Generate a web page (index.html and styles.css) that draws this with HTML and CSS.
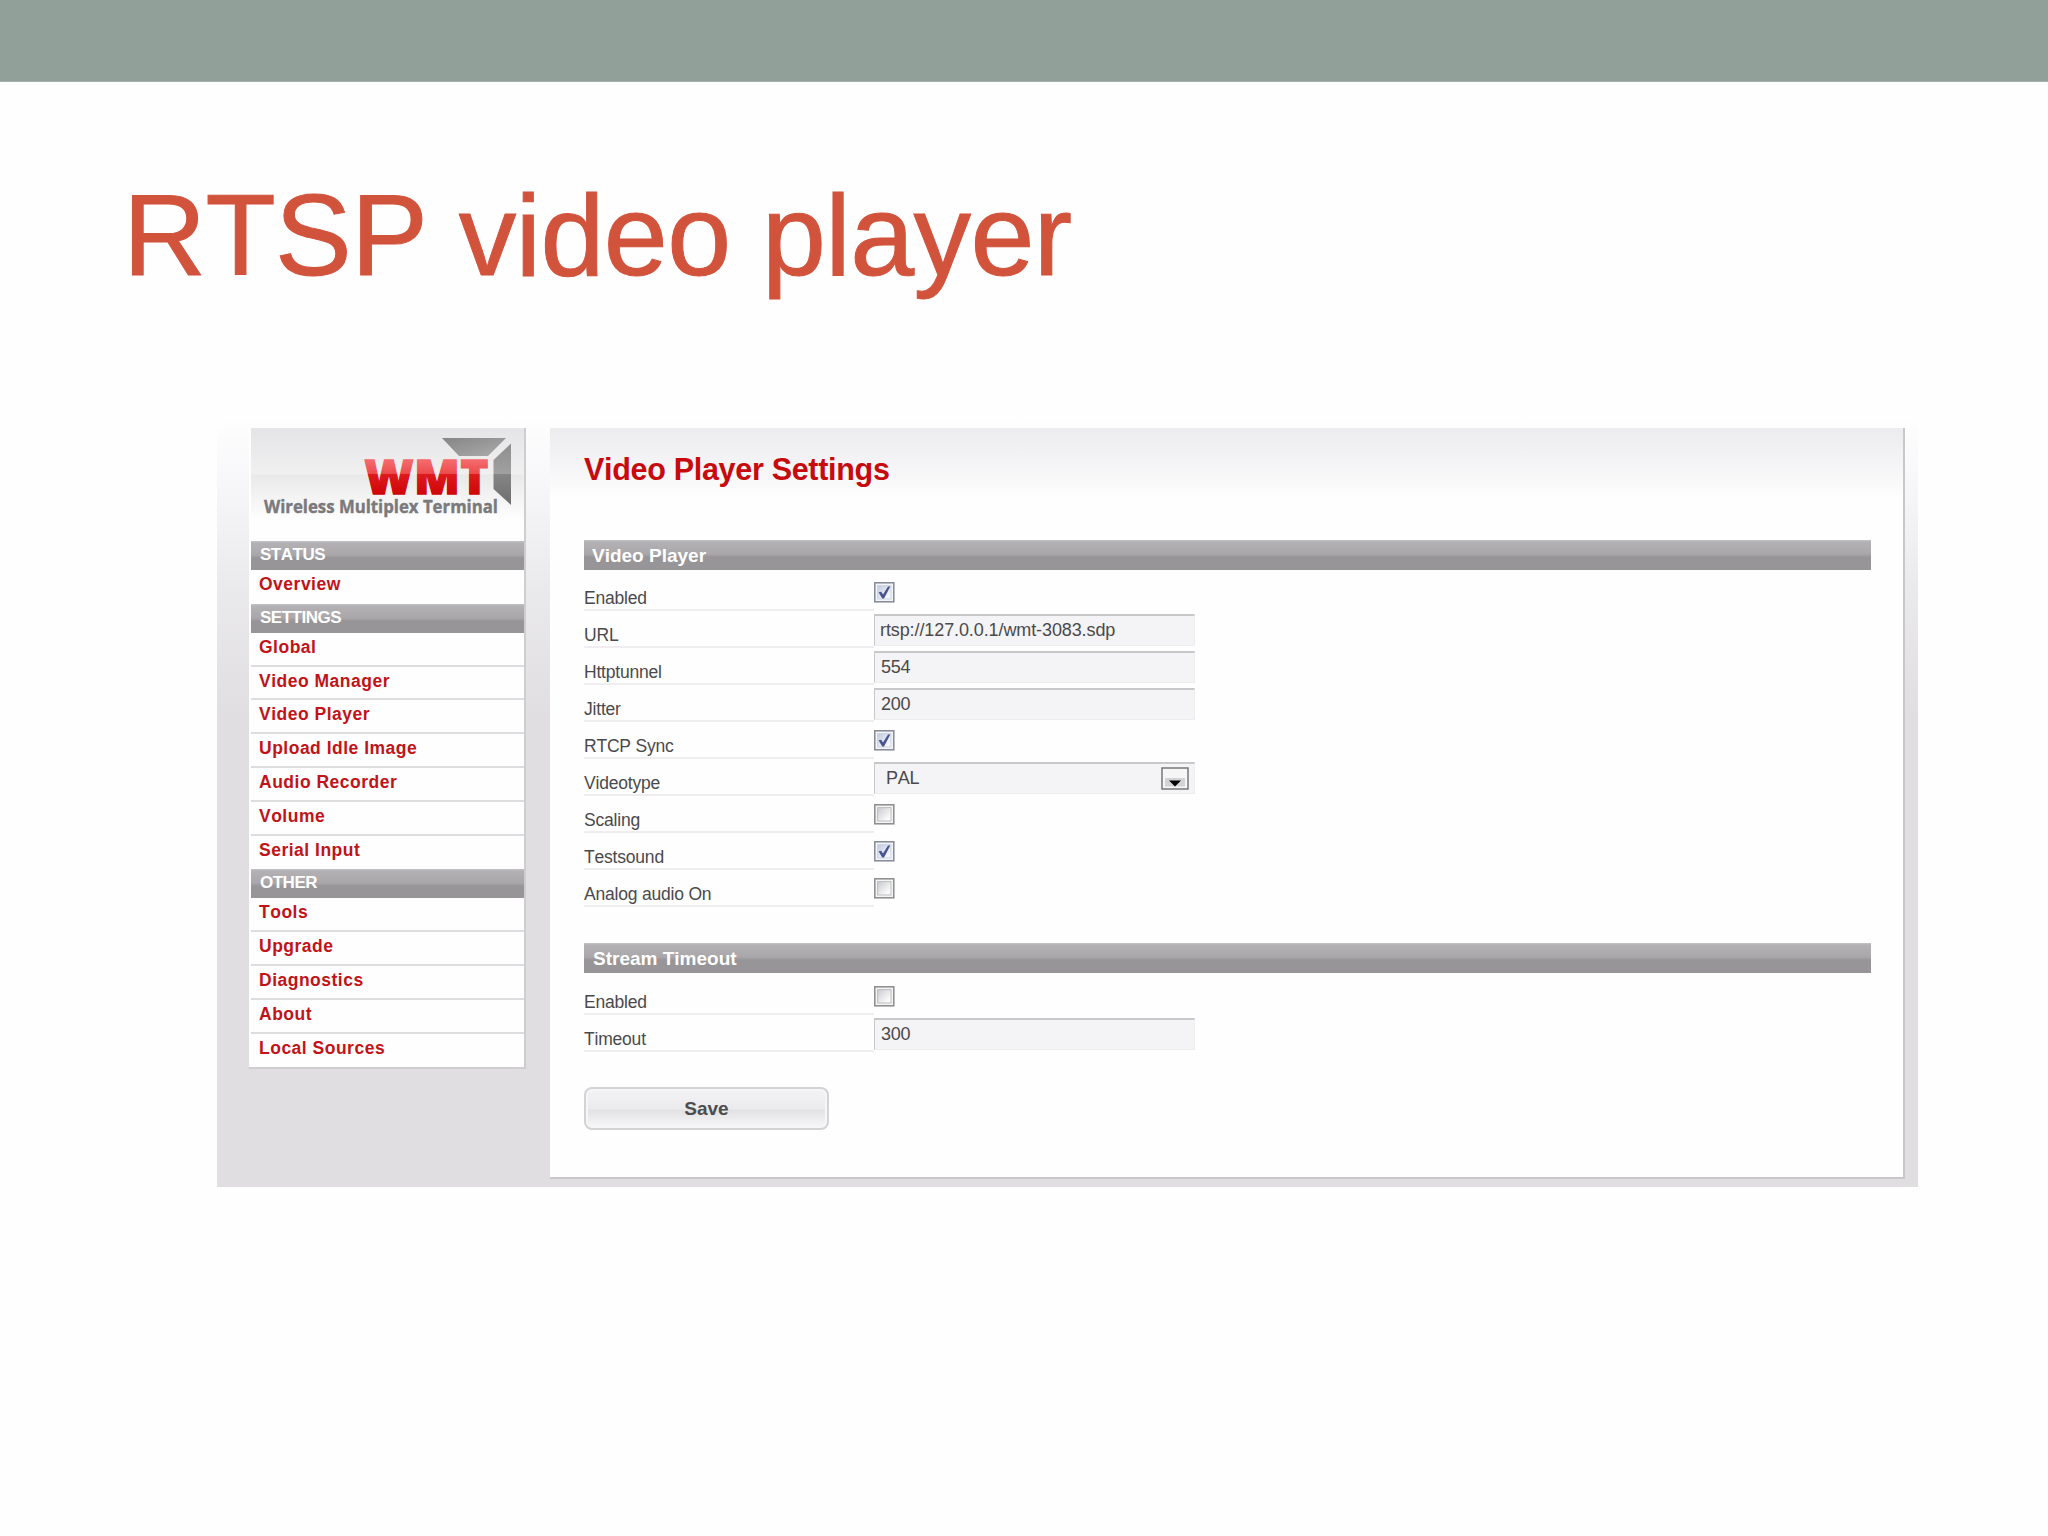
FILE: index.html
```html
<!DOCTYPE html>
<html lang="en">
    <head>
        <meta charset="UTF-8">
        <meta name="viewport" content="width=device-width, initial-scale=1.0">
        <title>RTSP video player</title>
        <link rel="stylesheet" href="styles.css">
    </head>
    <body>
        <div class="top-bar"></div>
        <h1 class="slide-title">RTSP video player</h1>

        <svg class="defs" width="0" height="0">
            <defs>
                <linearGradient id="boxOff" x1="0" y1="0" x2="1" y2="1">
                    <stop offset="0" stop-color="#c9cacf"/>
                    <stop offset="0.8" stop-color="#fbfbfb"/>
                </linearGradient>
                <linearGradient id="boxOn" x1="0" y1="0" x2="1" y2="1">
                    <stop offset="0" stop-color="#c0c9df"/>
                    <stop offset="0.8" stop-color="#f5f8fc"/>
                </linearGradient>
            </defs>
            <symbol id="box-off" viewBox="0 0 21 21">
                <rect x="0.800" y="0.800" width="19" height="19" fill="#f4f4f4" stroke="#8a8b8d" stroke-width="1.5"/>
                <rect x="3.600" y="3.600" width="13.400" height="13.400" fill="url(#boxOff)" stroke="#bcbdc1" stroke-width="1"/>
            </symbol>
            <symbol id="box-on" viewBox="0 0 21 21">
                <rect x="0.800" y="0.800" width="19" height="19" fill="#f3f5f9" stroke="#838994" stroke-width="1.5"/>
                <rect x="3.600" y="3.600" width="13.400" height="13.400" fill="url(#boxOn)" stroke="#ccd3e2" stroke-width="1"/>
                <path d="M4.600 10.200 L7.200 9.800 L9 12.600 L14 4.400 L16.300 4.400 L10 16.600 L8.200 16.600 Z" fill="#48558f"/>
            </symbol>
        </svg>

        <div class="app">
            <div class="sidebar">
                <svg class="logo" viewBox="0 0 273 113">
                    <defs>
                        <linearGradient id="wmtRed" gradientUnits="userSpaceOnUse" x1="0" y1="33" x2="0" y2="67">
                            <stop offset="0" stop-color="#f4696b"/>
                            <stop offset="0.38" stop-color="#ec4a4c"/>
                            <stop offset="0.39" stop-color="#dd1a1c"/>
                            <stop offset="1" stop-color="#cf0508"/>
                        </linearGradient>
                        <linearGradient id="wingTop" x1="0" y1="0" x2="1" y2="1">
                            <stop offset="0" stop-color="#858585"/>
                            <stop offset="1" stop-color="#acacac"/>
                        </linearGradient>
                        <linearGradient id="wingSide" x1="0" y1="0" x2="0" y2="1">
                            <stop offset="0" stop-color="#8e8e8e"/>
                            <stop offset="0.49" stop-color="#a0a0a0"/>
                            <stop offset="0.5" stop-color="#858585"/>
                            <stop offset="1" stop-color="#6e6e6e"/>
                        </linearGradient>
                    </defs>
                    <polygon points="191,10 255,10 237,28 208,28" fill="url(#wingTop)"/>
                    <polygon points="260,15.500 260,77 242.500,61 242.500,32" fill="url(#wingSide)"/>
                    <text class="logo-name" x="113.500" y="66">WMT</text>
                    <text class="logo-sub" x="13" y="84.500" textLength="234" lengthAdjust="spacingAndGlyphs">Wireless Multiplex Terminal</text>
                </svg>
                <div class="nav-title">STATUS</div>
                <ul class="nav">
                    <li>Overview</li>
                </ul>
                <div class="nav-title">SETTINGS</div>
                <ul class="nav">
                    <li>Global</li>
                    <li>Video Manager</li>
                    <li>Video Player</li>
                    <li>Upload Idle Image</li>
                    <li>Audio Recorder</li>
                    <li>Volume</li>
                    <li>Serial Input</li>
                </ul>
                <div class="nav-title">OTHER</div>
                <ul class="nav">
                    <li>Tools</li>
                    <li>Upgrade</li>
                    <li>Diagnostics</li>
                    <li>About</li>
                    <li>Local Sources</li>
                </ul>
            </div>

            <div class="content">
                <h2>Video Player Settings</h2>

                <h3>Video Player</h3>
                <div class="row"><label>Enabled</label><svg class="check"><use href="#box-on"/></svg></div>
                <div class="row"><label>URL</label><input class="field url" type="text" value="rtsp://127.0.0.1/wmt-3083.sdp"></div>
                <div class="row"><label>Httptunnel</label><input class="field" type="text" value="554"></div>
                <div class="row"><label>Jitter</label><input class="field" type="text" value="200"></div>
                <div class="row"><label>RTCP Sync</label><svg class="check"><use href="#box-on"/></svg></div>
                <div class="row">
                    <label>Videotype</label>
                    <div class="field select">
                        <span>PAL</span>
                        <svg class="arrow" viewBox="0 0 28 23">
                            <rect x="1" y="1" width="26" height="21" fill="#f6f6f6" stroke="#77777a" stroke-width="1.5"/>
                            <rect x="4" y="11" width="20" height="8.500" fill="#d3d3d5"/>
                            <path d="M8 13.500 H20 L14 19.500 Z" fill="#000"/>
                        </svg>
                    </div>
                </div>
                <div class="row"><label>Scaling</label><svg class="check"><use href="#box-off"/></svg></div>
                <div class="row"><label>Testsound</label><svg class="check"><use href="#box-on"/></svg></div>
                <div class="row"><label>Analog audio On</label><svg class="check"><use href="#box-off"/></svg></div>

                <h3 class="second">Stream Timeout</h3>
                <div class="row"><label>Enabled</label><svg class="check"><use href="#box-off"/></svg></div>
                <div class="row"><label>Timeout</label><input class="field" type="text" value="300"></div>

                <button class="save">Save</button>
            </div>
        </div>
    </body>
</html>
```
FILE: styles.css
```css
* {
    box-sizing: border-box;
}

body {
    margin: 0;
    height: 1536px;
    overflow: hidden;
    background-color: #fefefe;
    font-family: "Liberation Sans", Arial, sans-serif;
    font-kerning: none;
}

.top-bar {
    height: 82px;
    background-color: #91a199;
    border-bottom: 1px solid #a5b1ab;
}

.slide-title {
    margin: 0;
    padding: 87px 0 0 123px;
    height: 336px;
    font-size: 115px;
    line-height: 133px;
    letter-spacing: -0.6px;
    font-weight: normal;
    color: #d2533c;
    -webkit-text-stroke: 1px #d2533c;
    white-space: nowrap;
}

.defs {
    display: block;
}

.app {
    display: flex;
    align-items: flex-start;
    gap: 24px;
    width: 1701px;
    height: 769px;
    margin-left: 217px;
    padding: 10px 13px 10px 32px;
    background-image: linear-gradient(#fefefe 0, #f9f8fa 50px, #eae9ec 170px, #e0dee1 300px, #e0dee1 100%);
}

.sidebar {
    width: 277px;
    padding-left: 2px;
    background-color: #fefefe;
    border-right: 2px solid #cfcdd0;
    border-bottom: 2px solid #cfcdd0;
}

.logo {
    display: block;
    width: 273px;
    height: 113px;
    background-image: linear-gradient(#e5e4e6 0, #f0f0f1 46px, #e9e9ea 47px, #fefefe 92px);
}

.logo-name {
    font-family: "Open Sans", sans-serif;
    font-size: 47px;
    font-weight: 800;
    letter-spacing: 0.8px;
    fill: url(#wmtRed);
    stroke: url(#wmtRed);
    stroke-width: 1.6px;
}

.logo-sub {
    font-family: "Open Sans", sans-serif;
    font-size: 17.5px;
    font-weight: 700;
    fill: #7a7a7d;
    stroke: #7a7a7d;
    stroke-width: 0.4px;
}

.nav-title,
.content h3 {
    background-image: linear-gradient(#c4c3c5 0, #b3b1b4 2px, #a9a7aa 14px, #979598 17px, #979598 100%);
    color: #fff;
    font-weight: bold;
}

.nav-title {
    height: 29px;
    padding-left: 9px;
    font-size: 17px;
    line-height: 28px;
    letter-spacing: -0.5px;
}

.nav li {
    height: 33.8px;
    padding-left: 8px;
    border-bottom: 2px solid #dddcde;
    font-size: 17.5px;
    line-height: 28px;
    letter-spacing: 0.5px;
    font-weight: bold;
    color: #c11318;
}

.nav {
    margin: 0;
    padding: 0;
    list-style: none;
}

.nav li:last-child {
    border-bottom: none;
}

.content {
    flex: 1;
    height: 751px;
    padding: 0 32px 0 34px;
    background-color: #fefefe;
    background-image: linear-gradient(#ecebed 0, #f3f2f4 30px, #fefefe 70px);
    border-right: 2px solid #c9c7ca;
    border-bottom: 2px solid #c9c7ca;
}

.content h2 {
    margin: 0;
    height: 112px;
    padding-top: 23px;
    font-size: 30.5px;
    line-height: 36px;
    letter-spacing: -0.3px;
    color: #c70a0e;
}

.content h3 {
    margin: 0 0 3px;
    height: 30px;
    padding-left: 8px;
    font-size: 19px;
    line-height: 31px;
}

.content h3.second {
    margin-top: 37px;
    margin-bottom: 4px;
    padding-left: 9px;
}

.row {
    display: flex;
    height: 37px;
}

.row label {
    width: 290px;
    height: 38px;
    padding-top: 14px;
    border-bottom: 2px solid #efedf0;
    font-size: 17.5px;
    line-height: 22px;
    letter-spacing: -0.2px;
    color: #4a4a4c;
}

.check {
    width: 21px;
    height: 21px;
    margin-top: 9px;
}

.field {
    width: 321px;
    height: 32px;
    margin: 4px 0 0;
    padding: 0 0 0 6px;
    background-color: #f4f3f5;
    border: 1px solid #ededee;
    border-top: 2px solid #c8c7ca;
    border-left: 1px solid #c8c7ca;
    font-family: inherit;
    font-size: 18px;
    letter-spacing: -0.3px;
    color: #4a4a4c;
    outline: none;
}

.url {
    padding-left: 5px;
    letter-spacing: -0.1px;
}

.select {
    display: flex;
    align-items: center;
    justify-content: space-between;
    padding: 0 5px 0 11px;
}

.arrow {
    width: 28px;
    height: 23px;
    margin-top: -1px;
}

.save {
    display: block;
    width: 245px;
    height: 43px;
    margin-top: 36px;
    padding: 0;
    border: 2px solid #d3d2d5;
    border-radius: 8px;
    background-image: linear-gradient(#f3f2f4 0, #ebeaec 20px, #e2e1e3 21px, #f8f8f9 100%);
    box-shadow: inset 0 0 0 2px #f6f5f7;
    font-family: inherit;
    font-size: 19px;
    font-weight: bold;
    color: #4d4d4f;
}
```
